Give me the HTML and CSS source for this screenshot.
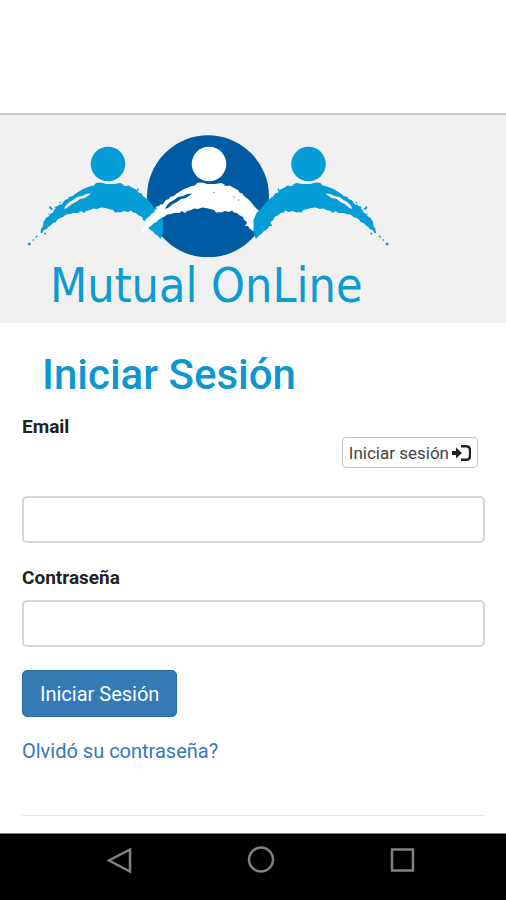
FILE: index.html
```
<!DOCTYPE html>
<html lang="es">
<head>
<meta charset="utf-8">
<meta name="viewport" content="width=device-width, initial-scale=1">
<title>Mutual OnLine</title>
<link rel="stylesheet" href="styles.css">
</head>
<body>
<div class="topbar"></div>
<header class="banner">
  <svg class="logo" viewBox="28 135 361 122" aria-hidden="true">
    <defs>
      <g id="figure">
        <circle cx="108" cy="164" r="17.3"/>
        <path fill-rule="evenodd" d="M40.500 233L41 229L43 226L43.500 222L46 218L49 216L50 214L53 212.500L54 210L56 208L54 207L58 206L60 204L61 205L65 200L68 199L69 197L73 196L75 194L79 191.500L83 189L87 187.500L91 186L94 185.500L96 183L99 182.500L103 183L106 184L114 184L120 183L124 184.500L122 185L126 186L129 185.500L131 187L137 190L139 193L141 193L143 196L147 199L150 202L153 206L156 209L160 213L163 220L163 230L162 236L160.500 239L158 236L155 234L153 231.500L149 229L147 226L144 226L146 223L145 221L143 220L142 217L138 215L136 213L133 212.500L131 210.500L128 212L124 211L120 212.500L117 212L115.500 213L113 210L109 209L105 208L101 207.500L97 209L93 208.500L90 210L86 211L84 213L81 211L78 213L73 213L70 214L66 214.500L63 217L60 218L57 220L56 222L53 223L50 226L48 227L47 229L44 230L42 233ZM64 209L67 208L72 204L76 202L80 199L85 198L90 194.500L91 193.500L86 194L82 196L77 197L73 200L70 201.500L66 205Z"/>
      </g>
      <g id="specks">
        <path d="M28 243L30 242.500L31 244L30 245.500L28 245ZM32 240L33.500 239L34 240L33 241ZM35 237L37 235.500L38 236L36 238ZM44 233L46 232.500L46 234L45 235ZM49 207L50 206L52 208L53 208.500L52 210L50 209ZM48 214L49 213L49.500 214.500ZM59 202.500L61 201.500L60.500 203.500ZM137 189L138 188L139 190L138 191Z"/>
      </g>
    </defs>
    <circle cx="208" cy="196.300" r="61" fill="#005ba3"/>
    <g fill="#049dd5"><use href="#figure"/><use href="#specks"/></g>
    <use href="#figure" x="101" fill="#fff"/>
    <path d="M213 192h2v1h-2zM233 196l2 1v1l-2-.5zM238 199h1v2h-1z" fill="#8bb6d8"/>
    <g transform="translate(416.500) scale(-1 1)" fill="#049dd5"><use href="#figure"/><use href="#specks"/></g>
  </svg>
  <div class="wordmark">Mutual OnLine</div>
</header>
<main class="content">
  <h1>Iniciar Sesión</h1>
  <form>
    <label for="email">Email</label>
    <div class="access">
      <button type="button" class="btn-small">Iniciar sesión
        <svg width="19" height="16" viewBox="0 0 19 16" aria-hidden="true"><path d="M0 6h4V2.500L10 8l-6 5.500V10H0z" fill="#222"/><path d="M9 1.200h5q4 0 4 4v5.600q0 4-4 4H9" fill="none" stroke="#222" stroke-width="2.400"/></svg>
      </button>
    </div>
    <input id="email" type="email">
    <label for="password">Contraseña</label>
    <input id="password" type="password">
    <button type="submit" class="btn-primary">Iniciar Sesión</button>
    <a href="#">Olvidó su contraseña?</a>
  </form>
  <hr>
</main>
<nav class="system-nav" aria-label="Sistema">
  <button type="button" aria-label="Atrás"><svg width="28" height="28" viewBox="0 0 28 28"><path d="M24 2.500v22L3 13.500z"/></svg></button>
  <button type="button" aria-label="Inicio"><svg width="28" height="28" viewBox="0 0 28 28"><circle cx="14" cy="12.500" r="12"/></svg></button>
  <button type="button" aria-label="Recientes"><svg width="28" height="28" viewBox="0 0 28 28"><rect x="4" y="2.500" width="21" height="21"/></svg></button>
</nav>
</body>
</html>
```
FILE: styles.css
```
* { box-sizing: border-box; }
body {
  margin: 0;
  min-height: 100vh;
  display: flex;
  flex-direction: column;
  background: #fff;
  color: #222;
  font: 18px/24px Roboto, sans-serif;
}
button { font: inherit; cursor: pointer; }
.topbar { height: 113px; }
.banner {
  padding: 20px 28px 10px;
  border-top: 2px solid #c8c8c8;
  background: #f1f1f1;
}
.logo { display: block; width: 361px; max-width: 100%; }
.wordmark {
  padding-left: 22px;
  color: #0c9bd1;
  font: 48px/56px "DejaVu Sans Condensed", "Noto Sans", sans-serif;
}
.content { flex: 1; padding: 0 21px 0 22px; }
h1 {
  margin: 28px 20px 16px;
  color: #0c97d0;
  font-size: 42px;
  line-height: 48px;
  font-weight: 500;
}
form { display: flex; flex-direction: column; align-items: flex-start; }
label { margin-bottom: 10px; font-size: 19px; font-weight: 700; line-height: 24px; }
.access { align-self: flex-end; margin: -12px 7px 28px; }
.btn-small {
  display: flex;
  align-items: center;
  gap: 3px;
  height: 31px;
  padding: 0 6px;
  border: 1px solid #c4c4c4;
  border-radius: 4px;
  background: #fff;
  color: #444;
  font-size: 17px;
}
input {
  width: 100%;
  height: 47px;
  margin-bottom: 23px;
  padding: 8px 16px;
  border: 2px solid #d6d6d6;
  border-radius: 5px;
  background: #fff;
  font: inherit;
}
.btn-primary {
  height: 47px;
  margin-bottom: 22px;
  padding: 0 17px;
  border: 1px solid #2a6caa;
  border-radius: 5px;
  background: #337ab7;
  color: #fff;
  font-size: 20px;
}
a { color: #337ab7; font-size: 20px; text-decoration: none; }
hr { margin: 52px 0 0; border: 0; border-top: 1px solid #e8e8e8; }
.system-nav {
  display: flex;
  justify-content: center;
  gap: 113px;
  height: 67px;
  padding: 13px 0 13px 15px;
  border-top: 1px solid #7c8383;
  background: #000;
}
.system-nav button { display: block; height: 28px; padding: 0; border: 0; background: none; }
.system-nav svg { display: block; overflow: visible; fill: none; stroke: #808080; stroke-width: 2.5; }
```
